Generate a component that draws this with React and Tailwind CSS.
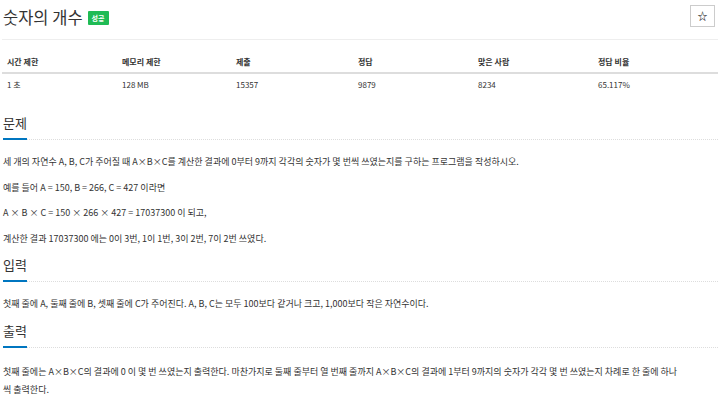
import React from 'react'

const stats = [
  { label: '시간 제한', value: '1 초', w: 'w-[115px]' },
  { label: '메모리 제한', value: '128 MB', w: 'w-[114px]' },
  { label: '제출', value: '15357', w: 'w-[122px]' },
  { label: '정답', value: '9879', w: 'w-[120px]' },
  { label: '맞은 사람', value: '8234', w: 'w-[120px]' },
  { label: '정답 비율', value: '65.117%', w: 'flex-1' },
]

function Section({ title, children, className = '', bodyClass = 'mt-[13px]' }) {
  return (
    <section className={className}>
      <h2 className="border-b border-dotted border-[#ddd] text-[13px] font-normal text-[#333]">
        <span className="-mb-px inline-block border-b-2 border-[#0076c0] pb-[5px] leading-[20px]">{title}</span>
      </h2>
      <div className={`${bodyClass} text-[9px] leading-[18px] text-[#333]`}>{children}</div>
    </section>
  )
}

export default function App() {
  return (
    <div className="min-h-screen bg-white px-[2px] font-['Noto_Sans_CJK_KR','Noto_Sans',sans-serif] text-[#333]">
      <div className="flex h-[40px] items-start justify-between border-b border-[#eee] pl-px">
        <div className="mt-[5px] flex items-center gap-[5px]">
          <h1 className="text-[16.5px] leading-[24px] font-normal">숫자의 개수</h1>
          <span className="mt-[2px] rounded-[1px] bg-[#1fbb55] px-[4px] py-[2px] text-[7px] leading-[10px] font-bold text-white">성공</span>
        </div>
        <button className="mt-[5px] mr-[3px] flex h-[22px] w-[25px] items-center justify-center border border-[#ccc] bg-white text-[10px] leading-none text-black">☆</button>
      </div>

      <div className="mt-[11px] text-[8px]">
        <div className="flex h-[23px] items-center border-b-2 border-[#ddd] font-bold">
          {stats.map((s) => (
            <div key={s.label} className={`${s.w} pl-[5px]`}>{s.label}</div>
          ))}
        </div>
        <div className="flex h-[21px] items-center">
          {stats.map((s) => (
            <div key={s.label} className={`${s.w} pl-[5px]`}>{s.value}</div>
          ))}
        </div>
      </div>

      <Section title="문제" className="mt-[18px] pl-px">
        <p className="mb-[7.5px]">세 개의 자연수 A, B, C가 주어질 때 A×B×C를 계산한 결과에 0부터 9까지 각각의 숫자가 몇 번씩 쓰였는지를 구하는 프로그램을 작성하시오.</p>
        <p className="mb-[7.5px]">예를 들어 A = 150, B = 266, C = 427 이라면</p>
        <p className="mb-[7.5px]">A × B × C = 150 × 266 × 427 = 17037300 이 되고,</p>
        <p className="mb-[7.5px]">계산한 결과 17037300 에는 0이 3번, 1이 1번, 3이 2번, 7이 2번 쓰였다.</p>
      </Section>

      <Section title="입력" className="mt-[5px] pl-px">
        <p className="mb-[7.5px]">첫째 줄에 A, 둘째 줄에 B, 셋째 줄에 C가 주어진다. A, B, C는 모두 100보다 같거나 크고, 1,000보다 작은 자연수이다.</p>
      </Section>

      <Section title="출력" className="mt-[4.5px] pl-px" bodyClass="mt-[15px]">
        <p className="pr-[38px]">첫째 줄에는 A×B×C의 결과에 0 이 몇 번 쓰였는지 출력한다. 마찬가지로 둘째 줄부터 열 번째 줄까지 A×B×C의 결과에 1부터 9까지의 숫자가 각각 몇 번 쓰였는지 차례로 한 줄에 하나씩 출력한다.</p>
      </Section>
    </div>
  )
}
